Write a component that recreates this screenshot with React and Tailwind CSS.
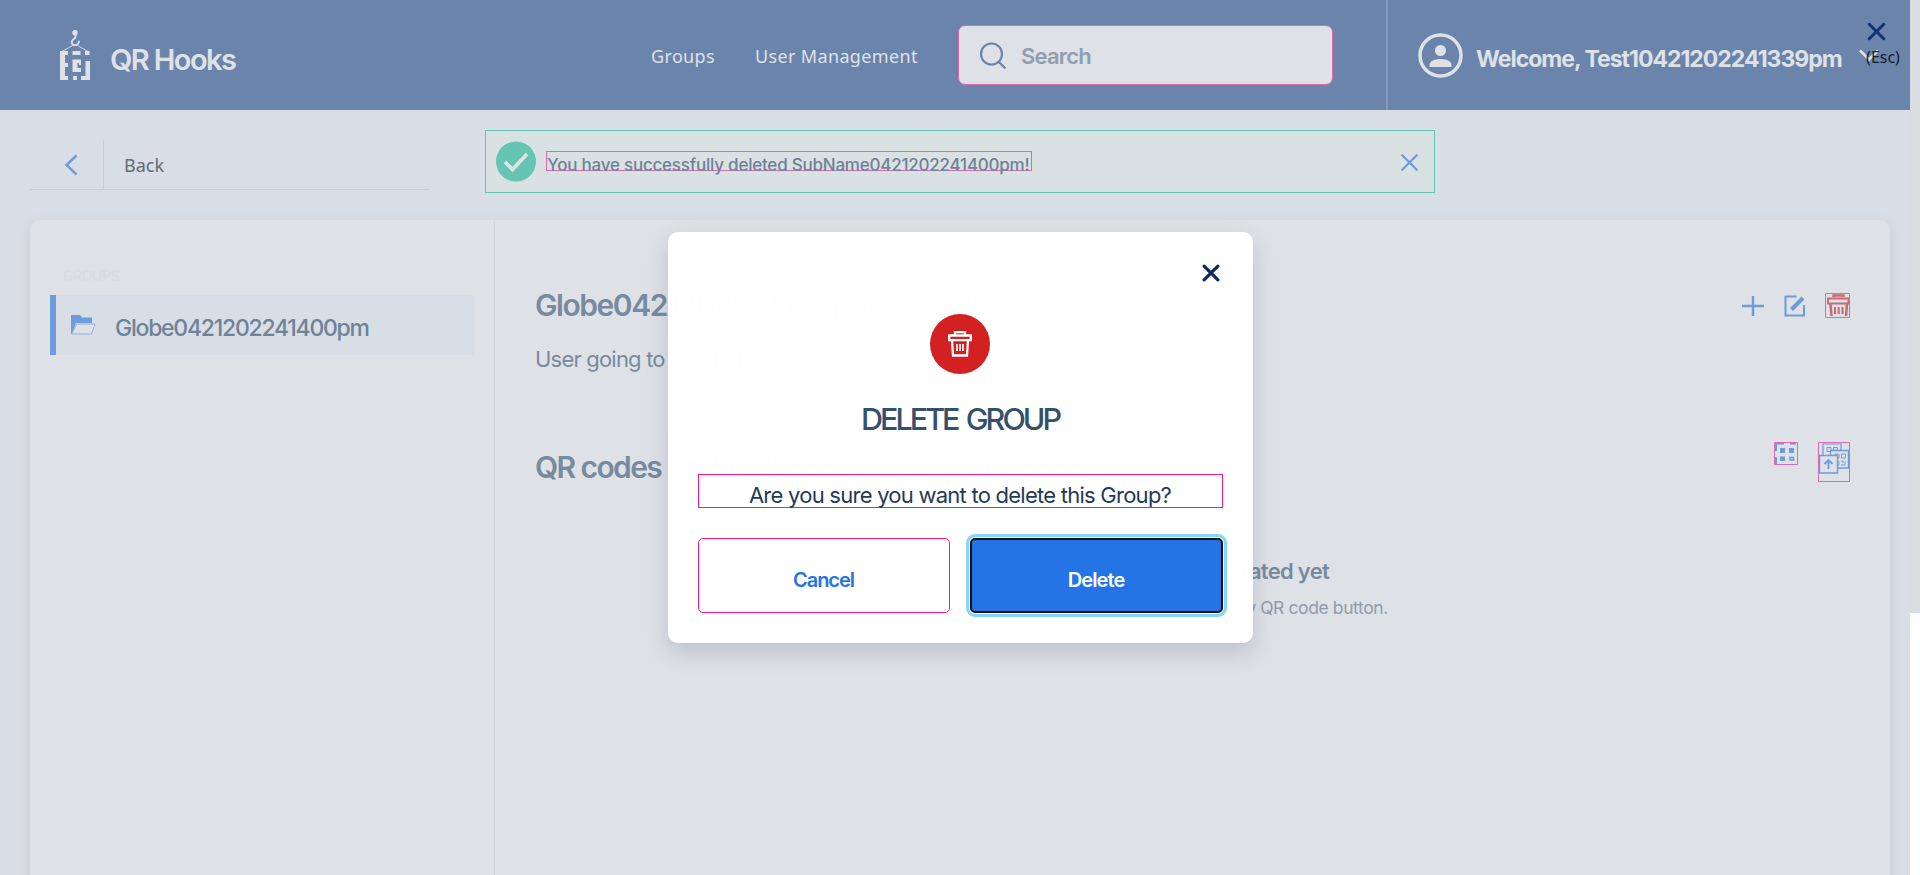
import React from "react";

function Label({ className, children }) {
  return <span className={"block whitespace-nowrap " + className}>{children}</span>;
}

function Logo() {
  return (
    <svg className="block h-[52px] w-[32px] shrink-0" viewBox="0 0 32 52" fill="#dee1e6">
      <circle cx="15" cy="2.700" r="2.700" />
      <path d="M15.500 4v3c-.5 2-3.800 2.200-3.800 5.200 0 4.200 7 4 7.300-1.500" fill="none" stroke="#dee1e6" strokeWidth="1.800" />
      <path d="M2 21.500 12.500 15.500h5L28 21.500" fill="none" stroke="#dee1e6" strokeWidth=".9" />
      <path d="M0 21h8v4H5v8h3v4H5v9h3v4H0zM12.500 21h8v4h-8zM25 21h4.500v4H25zM12.500 29.500H21V33h-3.500v5H21v4h-8.500zM25.500 31H30v19h-9v-4h4.500zM13 46h4v4h-4z" />
      <path d="M19 33h2v2h-2z" />
    </svg>
  );
}

function Close({ color, className, width }) {
  return (
    <svg className={className} viewBox="0 0 17 17" fill="none" stroke={color} strokeWidth={width} strokeLinecap="round">
      <path d="m2 2 13 13M15 2 2 15" />
    </svg>
  );
}

function ModalTrash() {
  return (
    <svg className="h-[26px] w-[24px]" viewBox="0 0 24 26" fill="none" stroke="#fff">
      <path d="M7 4V1.200h10V4M1.200 4.500h21.600v4.700H1.200zM4 9.500l1 15h14l1-15" strokeWidth="2.300" />
      <path d="M9 13v7M12 13v7M15 13v7" strokeWidth="1.700" />
    </svg>
  );
}

export default function App() {
  return (
    <div className="relative flex h-[875px] w-[1920px] overflow-hidden bg-[#d7dee5] font-['Inter',sans-serif]">
      <div className="flex w-[1910px] shrink-0 flex-col">
        <header className="flex h-[110px] shrink-0 bg-[#6b84ac] text-[#dee1e6]">
          <div className="flex w-[651px] pl-[60px] pt-[30px]">
            <Logo />
            <Label className="ml-[18px] mt-[12px] text-[29px] font-semibold leading-[36px] tracking-[-1.600px]">QR Hooks</Label>
          </div>
          <nav className="flex pt-[44px] font-['Noto_Sans',sans-serif] text-[18px] leading-[24px] tracking-[.35px]">
            <Label className="w-[104px]">Groups</Label>
            <Label className="w-[203px]">User Management</Label>
          </nav>
          <div className="mt-[25px] flex h-[60px] w-[375px] items-center rounded-[7px] border border-[#dc69b0] bg-[#dee1e6] pl-[20px]">
            <svg className="h-[28px] w-[28px]" viewBox="0 0 28 28" fill="none" stroke="#6b84ac" strokeWidth="2.200"><circle cx="12.500" cy="13" r="10.500" /><path d="m19.500 20.500 7 7" /></svg>
            <Label className="ml-[14px] mt-[2px] text-[22px] font-semibold tracking-[-.8px] text-[#909eae]">Search</Label>
          </div>
          <div className="ml-[53px] flex h-full w-[523px] border-l-2 border-[#8398ba] pl-[30px] pt-[33px]">
            <svg className="h-[45px] w-[45px] shrink-0" viewBox="0 0 45 45" fill="#dee1e6"><circle cx="22.500" cy="22.500" r="20.500" fill="none" stroke="#dee1e6" strokeWidth="3.500" /><circle cx="22.500" cy="17.500" r="5.500" /><path d="M11.500 34v-2c0-8 22-8 22 0v2z" /></svg>
            <Label className="ml-[13px] mt-[11px] text-[23px] font-bold leading-[30px] tracking-[-1px]">Welcome, Test10421202241339pm</Label>
            <svg className="ml-[17px] mt-[16px] h-[13px] w-[20px] shrink-0" viewBox="0 0 20 13" fill="none" stroke="#dee1e6" strokeWidth="2.600"><path d="m1 1.500 9 9 9-9" /></svg>
          </div>
        </header>
        <div className="flex h-[110px] shrink-0 pl-[30px]">
          <div className="mt-[30px] flex h-[50px] w-[400px] border-b border-[#c8cfd8]">
            <div className="flex w-[74px] items-center justify-center border-r border-[#c8cfd8] pl-[9px]">
              <svg className="h-[22px] w-[14px]" viewBox="0 0 14 22" fill="none" stroke="#6e9bdb" strokeWidth="2.500"><path d="M12.500 1.500 2.500 11l10 9.500" /></svg>
            </div>
            <Label className="ml-[20px] mt-[13px] font-['Noto_Sans',sans-serif] text-[18px] leading-[24px] text-[#646b75]">Back</Label>
          </div>
          <div className="ml-[55px] mt-[20px] flex h-[63px] w-[950px] border border-[#65c5b2] bg-[#d9e1e3] pl-[10px] pt-[9px]">
            <svg className="h-[42px] w-[40px] shrink-0" viewBox="0 0 40 42"><circle cx="20" cy="21.500" r="20" fill="#65c5b2" /><path d="m9 22 7.500 7.500L31 14" fill="none" stroke="#dee1e6" strokeWidth="3.800" /></svg>
            <div className="ml-[10px] mt-[11px] flex h-[20px] w-[486px] border border-[#dc69b0]">
              <Label className="text-[17px] font-medium leading-[26px] tracking-[-.22px] text-[#6f8298]">You have successfully deleted SubName0421202241400pm!</Label>
            </div>
            <Close className="ml-[368px] mt-[13px] h-[19px] w-[19px]" color="#6e9bdb" width="2" />
          </div>
        </div>
        <main className="ml-[30px] flex h-[700px] w-[1860px] shrink-0 rounded-[10px] bg-[#dee1e6] shadow-[0_4px_12px_rgba(120,140,160,0.2)]">
          <aside className="w-[465px] shrink-0 border-r border-[#d0d7de] pl-[20px] pt-[45px]">
            <Label className="h-[30px] pl-[13px] text-[14px] font-medium leading-[22px] tracking-[-.4px] text-[#d9dce2]">GROUPS</Label>
            <div className="flex h-[60px] w-[424px] items-center border-l-[6px] border-[#6e9bdb] bg-[#d7dee5] pl-[15px]">
              <svg className="h-[20px] w-[25px]" viewBox="0 0 25 20"><path d="M0 20V0h9l2 2.500h10V8H5z" fill="#6e9bdb" /><path d="M5.500 9H24l-3.500 10H1z" fill="#dee1e6" stroke="#8fb0df" /></svg>
              <Label className="ml-[19px] mt-[6px] text-[23px] font-medium tracking-[-1.250px] text-[#6f8298]">Globe0421202241400pm</Label>
            </div>
          </aside>
          <section className="flex-1 pl-[40px] pr-[40px] pt-[61px] text-[#778a9f]">
            <div className="flex h-[162px] justify-between">
              <div>
                <div className="flex items-start">
                  <Label className="mt-[3px] text-[30px] font-semibold leading-[42px] tracking-[-1.450px]">Globe0421202241400pm</Label>
                  <Label className="ml-[22px] h-[34px] w-[124px] rounded-[4px] bg-[#d2d8e0] text-center text-[16px] font-medium leading-[34px]">0 Sub Groups</Label>
                </div>
                <Label className="mt-[18px] text-[22px] leading-[30px] tracking-[-.8px]">User going to create the new group</Label>
              </div>
              <div className="mt-[12px] flex h-[25px] items-center">
                <svg className="h-[22px] w-[22px]" viewBox="0 0 22 22" stroke="#6e9bdb" strokeWidth="2.400"><path d="M11 1v20M0 11h22" /></svg>
                <svg className="ml-[20px] h-[22px] w-[22px]" viewBox="0 0 22 22" fill="none" stroke="#6e9bdb" strokeWidth="2"><path d="M12.500 1.500h-11v19h18.500V10" /><path d="M7.500 14.500 19 3" strokeWidth="4" /></svg>
                <svg className="ml-[19px] h-[25px] w-[25px]" viewBox="0 0 25 25" fill="none" stroke="#ca6b74"><path d="M.5.500h24v24H.5z" stroke="#dc69b0" /><path d="M8.500 4V2.500h10V4" strokeWidth="2.500" /><path d="M3 5.500h20.500v5H3z" strokeWidth="2" /><path d="m5.500 11 1 12M22 11l-1 12" strokeWidth="2.500" /><path d="M10 14v7M13.700 14v7M17.500 14v7" strokeWidth="2" /></svg>
              </div>
            </div>
            <div className="flex h-[113px] justify-between">
              <Label className="mt-[3px] text-[30px] font-semibold leading-[42px] tracking-[-1.600px]">QR codes under Globe0421202241400pm</Label>
              <div className="flex items-start">
                <svg className="-mt-px h-[23px] w-[24px]" viewBox="0 0 24 23" fill="#6e9bdb"><path d="M.5.500h23v22H.5z" fill="none" stroke="#dc69b0" /><path d="M1 1h9v1.500H3V9H1zM16 1h6v1.500h-6zM1 15h2v7H1zM6 6h5v5H6zM15 6h5v5h-5zM6 14.500h5v4.500H6z" /><path d="M16 15.500h3.500V18H16z" fill="none" stroke="#6e9bdb" strokeWidth="1.500" /></svg>
                <svg className="-mt-px ml-[20px] h-[40px] w-[32px]" viewBox="0 0 32 40" fill="#dee1e6" stroke="#6e9bdb"><path d="M.5.500h31v39H.5z" fill="none" stroke="#dc69b0" /><path d="M5 2h18v17H5z" strokeWidth="1.200" /><path d="M9 5.500h4v4H9zM15.500 5.500h4v4h-4z" /><path d="M12.500 8.500h18V26h-18z" strokeWidth="1.400" /><path d="M17 12h4v4h-4zM23.500 12h4v4h-4zM17 19.500h4V23h-4zM23 19h2v2M27 19v4h-4" strokeWidth=".9" /><path d="M1.500 13.500h18V31h-18z" strokeWidth="1.400" /><path d="M10.500 27v-8.500M6.500 22l4-4 4 4" fill="none" strokeWidth="1.800" /></svg>
              </div>
            </div>
            <div className="flex flex-col items-center">
              <Label className="text-[22px] font-semibold leading-[30px] tracking-[-.7px]">No QR codes generated yet</Label>
              <Label className="mt-[9px] pl-[16px] text-[17.500px] leading-[26px] tracking-[-.4px] text-[#8f9cab]">Please click on the Create new QR code button.</Label>
            </div>
          </section>
        </main>
      </div>
      <div className="h-[875px] w-[10px] shrink-0 bg-white">
        <div className="h-[613px] bg-[#d7dde0]" />
      </div>

      <div className="absolute right-[19px] top-[22px] flex w-[36px] flex-col items-center">
        <Close className="mr-[13px] h-[19px] w-[19px]" color="#0f3478" width="2.700" />
        <Label className="mt-[5px] font-['Noto_Sans',sans-serif] text-[16px] leading-[22px] text-[#171c26]">(Esc)</Label>
      </div>

      <div className="absolute inset-0 flex items-center justify-center">
        <div className="flex h-[411px] w-[585px] flex-col items-center rounded-[10px] bg-white/99 px-[30px] shadow-[0_10px_22px_rgba(60,75,95,0.2)]">
          <div className="flex h-[82px] w-full justify-end pr-[3px] pt-[32px]">
            <Close className="h-[18px] w-[18px]" color="#0a2a63" width="3" />
          </div>
          <div className="flex h-[60px] w-[60px] shrink-0 items-center justify-center rounded-full bg-[#d32121]">
            <ModalTrash />
          </div>
          <Label className="mt-[25px] h-[40px] text-[30.500px] font-medium leading-[40px] tracking-[-2.950px] [word-spacing:3px] text-[#34506d]">DELETE GROUP</Label>
          <div className="mt-[35px] flex h-[34px] w-full justify-center border border-[#f81894]">
            <Label className="text-[22px] leading-[40px] tracking-[-.75px] text-[#1f3a5a]">Are you sure you want to delete this Group?</Label>
          </div>
          <div className="mt-[30px] flex w-full justify-between">
            <button className="h-[75px] w-[252px] rounded-[5px] border border-[#f81894] pt-[8px] text-[20px] font-semibold tracking-[-1.050px] text-[#2474e6]">Cancel</button>
            <button className="h-[75px] w-[253px] rounded-[5px] border-2 border-[#101010] bg-[#2474e6] pt-[8px] text-[20px] font-semibold tracking-[-.9px] text-white shadow-[0_0_0_1px_#ffffff,0_0_0_4px_#80d8ff]">Delete</button>
          </div>
        </div>
      </div>
    </div>
  );
}
